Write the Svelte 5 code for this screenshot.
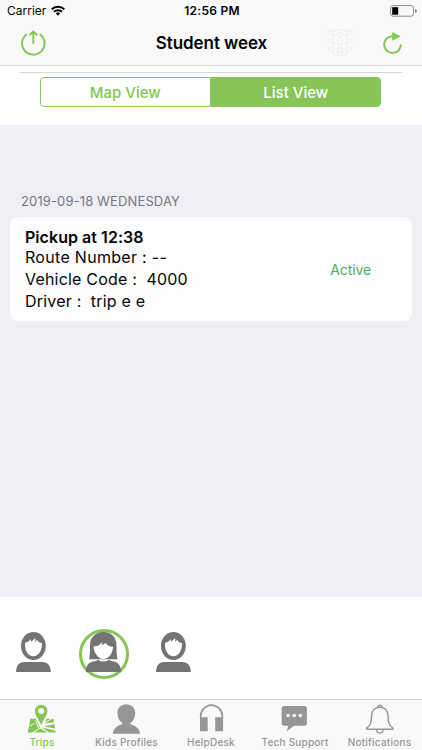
<script lang="ts">
	type Tab = { id: string; label: string; width: number };

	const tabs: Tab[] = [
		{ id: 'trips', label: 'Trips', width: 84 },
		{ id: 'kids', label: 'Kids Profiles', width: 85 },
		{ id: 'help', label: 'HelpDesk', width: 84 },
		{ id: 'support', label: 'Tech Support', width: 84 },
		{ id: 'notifications', label: 'Notifications', width: 85 }
	];

	const students = ['boy', 'girl', 'boy'];

	let activeTab = $state('trips');
	let view = $state<'map' | 'list'>('list');
	let selected = $state(1);
</script>

<div class="screen">
	<header>
		<div class="status">
			<div class="carrier">
				<span>Carrier</span>
				<svg width="14" height="11" viewBox="0 0 14 11">
					<g fill="none" stroke="#000" stroke-width="2">
						<path d="M.7 4.2a9 9 0 0 1 12.6 0" />
						<path d="M3 6.8a5.7 5.7 0 0 1 8 0" />
					</g>
					<path d="M4.8 8.4a3.1 3.1 0 0 1 4.4 0L7 10.7z" />
				</svg>
			</div>
			<time>12:56 PM</time>
			<svg class="battery" width="27" height="12" viewBox="0 0 27 12">
				<rect x=".6" y=".6" width="23" height="10.6" rx="2.5" fill="none" stroke="#8b8b8b" />
				<rect x="2.2" y="2.2" width="6" height="7.5" />
				<path d="M25 4v4q2-.7 2-2t-2-2" fill="#8b8b8b" />
			</svg>
		</div>
		<div class="nav">
			<button class="exit" aria-label="Log out">
				<svg width="26" height="26" viewBox="0 0 26 26" fill="none" stroke="#83c653" stroke-width="1.9">
					<path d="M6.8 4.2a11.3 11.3 0 1 0 13 0M13.3 13.8V2M9.4 5.2l3.9-3.7 3.9 3.7" />
				</svg>
			</button>
			<h1>Student weex</h1>
			<div class="actions">
				<svg width="26" height="27" viewBox="0 0 26 27" fill="none" stroke="#ececec">
					<rect x="6.5" y=".8" width="13" height="25.4" rx="1" />
					<circle cx="13" cy="5.6" r="2.7" />
					<circle cx="13" cy="13.4" r="2.7" />
					<circle cx="13" cy="21.2" r="2.7" />
					<path d="M6 2H1l2 4h3M6 10H1l2 4h3M6 18H1l2 4h3M20 2h5l-2 4h-3M20 10h5l-2 4h-3M20 18h5l-2 4h-3" />
				</svg>
				<button aria-label="Refresh">
					<svg width="20" height="24" viewBox="0 0 20 24">
						<path d="M9.5 5.2a8.400 8.400 0 1 0 8.400 8.400" fill="none" stroke="#83c653" stroke-width="2" />
						<path d="M9.200.9l8.600 4.300-8.600 4.500z" fill="#83c653" />
					</svg>
				</button>
			</div>
		</div>
	</header>

	<section class="switcher">
		<div class="segments">
			<button class:on={view === 'map'} onclick={() => (view = 'map')}>Map View</button>
			<button class:on={view === 'list'} onclick={() => (view = 'list')}>List View</button>
		</div>
	</section>

	<main>
		<h2>2019-09-18 WEDNESDAY</h2>
		<article>
			<div class="details">
				<strong>Pickup at 12:38</strong>
				<span class="route">Route Number : --</span>
				<span class="vehicle">Vehicle Code :&nbsp; 4000</span>
				<span class="driver">Driver :&nbsp; trip e e</span>
			</div>
			<span class="state">Active</span>
		</article>
	</main>

	<section class="students">
		{#each students as kind, i}
			<button
				class="student"
				class:selected={selected === i}
				onclick={() => (selected = i)}
				aria-label="Student {i + 1}"
			>
				{#if kind === 'boy'}
					<svg width="36" height="40" viewBox="0 0 36 40">
						<ellipse cx="17.4" cy="14" rx="12.4" ry="14" fill="#747474" />
						<path d="M9 11.200c.8-.3 1.300-.8 1.800-1.600l.2 1 4-3.400-.2 2.900L19.300 6l-.2 4 2-2.300c.7 2 2.400 3.200 4.800 3.400.4 7.500-3.400 13.200-8.500 13.200S8.500 18.500 9 11.200z" fill="#fff" />
						<path d="M0 40c.2-6.200 2.800-10 8.500-10h17.800c5.600 0 8.300 3.800 8.500 10z" fill="#747474" />
					</svg>
				{:else}
					<svg width="36" height="40" viewBox="0 0 36 40">
						<path d="M17.500 0C9 0 4 5.500 4 13.500c0 6-.1 11-1 13.800h28.500c-.8-3-1-8-1-13.800C30.500 5.500 26 0 17.500 0z" fill="#747474" />
						<path d="M7.500 14.600c4.500-.6 7.400-2.500 8.900-5.200-.2 1.600-.5 2.700-1.100 3.500 2-.5 3.300-1.100 4.600-2 1.100 2.200 3.500 3.700 7.200 4.100C26.500 21.500 22.800 27 17.500 27S8.200 21.600 7.500 14.600z" fill="#fff" />
						<path d="M0 40c0-6.500 2.500-9.500 7-10.500 2.600-.5 4.500-1 5.500-2.300 3.200 2 6.600 2 10 0 1 1.200 3 1.800 5.600 2.300 4.400 1 6.900 4 6.900 10.500z" fill="#747474" />
						<path d="M12.500 27.500q5 3 10 0" fill="none" stroke="#fff" stroke-width="1.100" />
					</svg>
				{/if}
			</button>
		{/each}
	</section>

	<nav class="tabbar">
		{#each tabs as tab}
			<button
				class:active={activeTab === tab.id}
				class={tab.id}
				style="width: {tab.width}px"
				onclick={() => (activeTab = tab.id)}
			>
				<svg width="30" height="32" viewBox="0 0 30 32" fill="currentColor">
					{#if tab.id === 'trips'}
						<path d="M3.400 14.800h5.400l4.300 9L5 28.600H.700z" />
						<path d="M14.600 21.500l10.600-6.700h1.300l.6 3.400-9.300 1.300z" />
						<path d="M19.300 14.800h4.200l-5.300 3.400zM16.500 22.400l10.900-2.200.6 4.200zM14.800 23.600l13.400 3 .4 2h-6.400zM13.500 24.600l7 4H6.800z" />
						<path d="M2.300 22.200l5.500-2.700M8.500 16l3 8" fill="none" stroke="#f9f9f9" />
						<path fill-rule="evenodd" d="M14.200.800a6.200 6.200 0 0 0-6.200 6.200c0 4.300 3.300 7.200 6.200 14.300 2.900-7.100 6.200-10 6.200-14.300A6.200 6.200 0 0 0 14.200.800zm0 3.200a3 3 0 1 1 0 6 3 3 0 0 1 0-6z" stroke="#f9f9f9" stroke-width=".8" paint-order="stroke" />
					{:else if tab.id === 'kids'}
						<path d="M14.300.300c-5.300 0-8.900 3.500-8.900 8.800 0 4.400 1.900 8 4.900 9.900v1.200C5.300 21.400 1.300 24.500.700 29.800h27.400c-.6-5.300-4.700-8.400-9.700-9.600V19c3-1.900 4.800-5.500 4.800-9.900 0-5.300-3.500-8.800-8.900-8.800z" />
					{:else if tab.id === 'help'}
						<path d="M4.700 14.500v-2.300a10.700 11 0 0 1 21.600 0v2.300" fill="none" stroke="currentColor" stroke-width="1.700" />
						<path d="M4 13.200h7.700v14H4zM19.200 13.200h7.900v14h-7.900z" />
					{:else if tab.id === 'support'}
						<path d="M4.200 2h20.200q2.500 0 2.500 2.500v14.700q0 2.500-2.500 2.500H14l-7.300 5.700 1.600-5.700H4.200q-2.500 0-2.500-2.500V4.500Q1.700 2 4.200 2z" />
						<g fill="#f9f9f9">
							<circle cx="8.100" cy="11.500" r="1.800" />
							<circle cx="14.200" cy="11.500" r="1.800" />
							<circle cx="20.300" cy="11.500" r="1.800" />
						</g>
					{:else}
						<g fill="none" stroke="currentColor" stroke-width="1.400">
							<path d="M12.600 3.700a2.200 2.500 0 1 1 4.400 0" />
							<path d="M14.800 3.400c-5.100 0-8 3.500-8.300 8.500-.3 7.200-.8 9.400-4.600 12-.8.900-.5 1.400.5 1.400h24.800c1 0 1.300-.5.500-1.400-3.800-2.600-4.300-4.800-4.600-12-.3-5-3.200-8.500-8.300-8.500z" />
							<path d="M11.600 25.800a3.200 3.300 0 0 0 6.400 0" />
						</g>
					{/if}
				</svg>
				<span>{tab.label}</span>
			</button>
		{/each}
	</nav>
</div>

<style>
	:global(body) {
		margin: 0;
		background: #fff;
	}

	.screen {
		display: flex;
		flex-direction: column;
		width: 422px;
		height: 750px;
		overflow: hidden;
		background: #fff;
		color: #050505;
		font-family: Inter, 'Liberation Sans', sans-serif;
	}

	button {
		margin: 0;
		padding: 0;
		border: 0;
		background: none;
		color: inherit;
		font: inherit;
		cursor: pointer;
	}

	svg {
		display: block;
		flex: none;
	}

	header {
		box-sizing: border-box;
		height: 66px;
		border-bottom: 1px solid #d6d6d6;
		background: #f9f9f9;
	}

	.status {
		display: grid;
		grid-template-columns: 1fr 80px 1fr;
		align-items: center;
		height: 21px;
		padding: 0 5px 0 7px;
		font-size: 12px;
	}

	.carrier {
		display: flex;
		align-items: center;
		gap: 5px;
	}

	time {
		text-align: center;
		font-weight: 600;
		letter-spacing: 0.25px;
	}

	.battery {
		justify-self: end;
	}

	.nav {
		display: grid;
		grid-template-columns: 1fr 120px 1fr;
		align-items: center;
		height: 43px;
		padding: 0 19px 0 20px;
	}

	.exit {
		width: 26px;
	}

	h1 {
		margin: 0;
		text-align: center;
		white-space: nowrap;
		font-size: 17px;
		font-weight: 600;
		letter-spacing: -0.08px;
	}

	.actions {
		display: flex;
		justify-content: end;
		align-items: center;
		gap: 30px;
	}

	.switcher {
		box-sizing: border-box;
		height: 59px;
		padding: 6px 20px 0;
	}

	.segments {
		display: flex;
		box-sizing: border-box;
		height: 35px;
		padding: 4px 21px 0 20px;
		border-top: 1px solid #d8d8dc;
	}

	.segments button {
		flex: 1;
		border: 1px solid #87c65a;
		border-radius: 4px 0 0 4px;
		color: #83c653;
		font-size: 15px;
		font-weight: 500;
	}

	.segments button + button {
		border-radius: 0 4px 4px 0;
	}

	.segments button.on {
		background: #87c559;
		color: #fff;
	}

	main {
		box-sizing: border-box;
		height: 472px;
		padding: 68px 10px 0;
		background: #efeef5;
	}

	h2 {
		margin: 0 0 7px 11px;
		color: #77777c;
		font-size: 13px;
		font-weight: 400;
		line-height: 17px;
		letter-spacing: 0.13px;
	}

	article {
		display: flex;
		justify-content: space-between;
		align-items: center;
		box-sizing: border-box;
		height: 104px;
		padding: 0 41px 0 15px;
		border-radius: 8px;
		background: #fdfdff;
	}

	.details {
		display: flex;
		flex-direction: column;
		padding-bottom: 1px;
		font-size: 16px;
		line-height: 22px;
	}

	strong {
		margin-bottom: -2px;
		font-weight: 600;
		letter-spacing: 0.05px;
	}

	.route {
		letter-spacing: 0.3px;
	}

	.vehicle,
	.driver {
		letter-spacing: 0.2px;
	}

	.state {
		color: #46b15d;
		font-size: 14px;
		letter-spacing: -0.1px;
	}

	.students {
		display: flex;
		align-items: center;
		box-sizing: border-box;
		height: 102px;
		padding: 12px 0 0 9px;
		gap: 20px;
	}

	.student {
		display: flex;
		align-items: center;
		justify-content: center;
		box-sizing: border-box;
		width: 50px;
		height: 50px;
		padding-bottom: 4px;
		border: 3px solid transparent;
		border-radius: 50%;
	}

	.student.selected {
		border-color: #83c653;
	}

	.tabbar {
		display: flex;
		box-sizing: border-box;
		height: 51px;
		border-top: 1px solid #d2d2d2;
		background: #f9f9f9;
	}

	.tabbar button {
		display: flex;
		flex-direction: column;
		align-items: center;
		padding-top: 4px;
		color: #969696;
		font-size: 10px;
		font-weight: 500;
		line-height: 13px;
		letter-spacing: 0.22px;
	}

	.tabbar button.active {
		color: #83c653;
	}

	.tabbar span {
		white-space: nowrap;
	}
</style>
